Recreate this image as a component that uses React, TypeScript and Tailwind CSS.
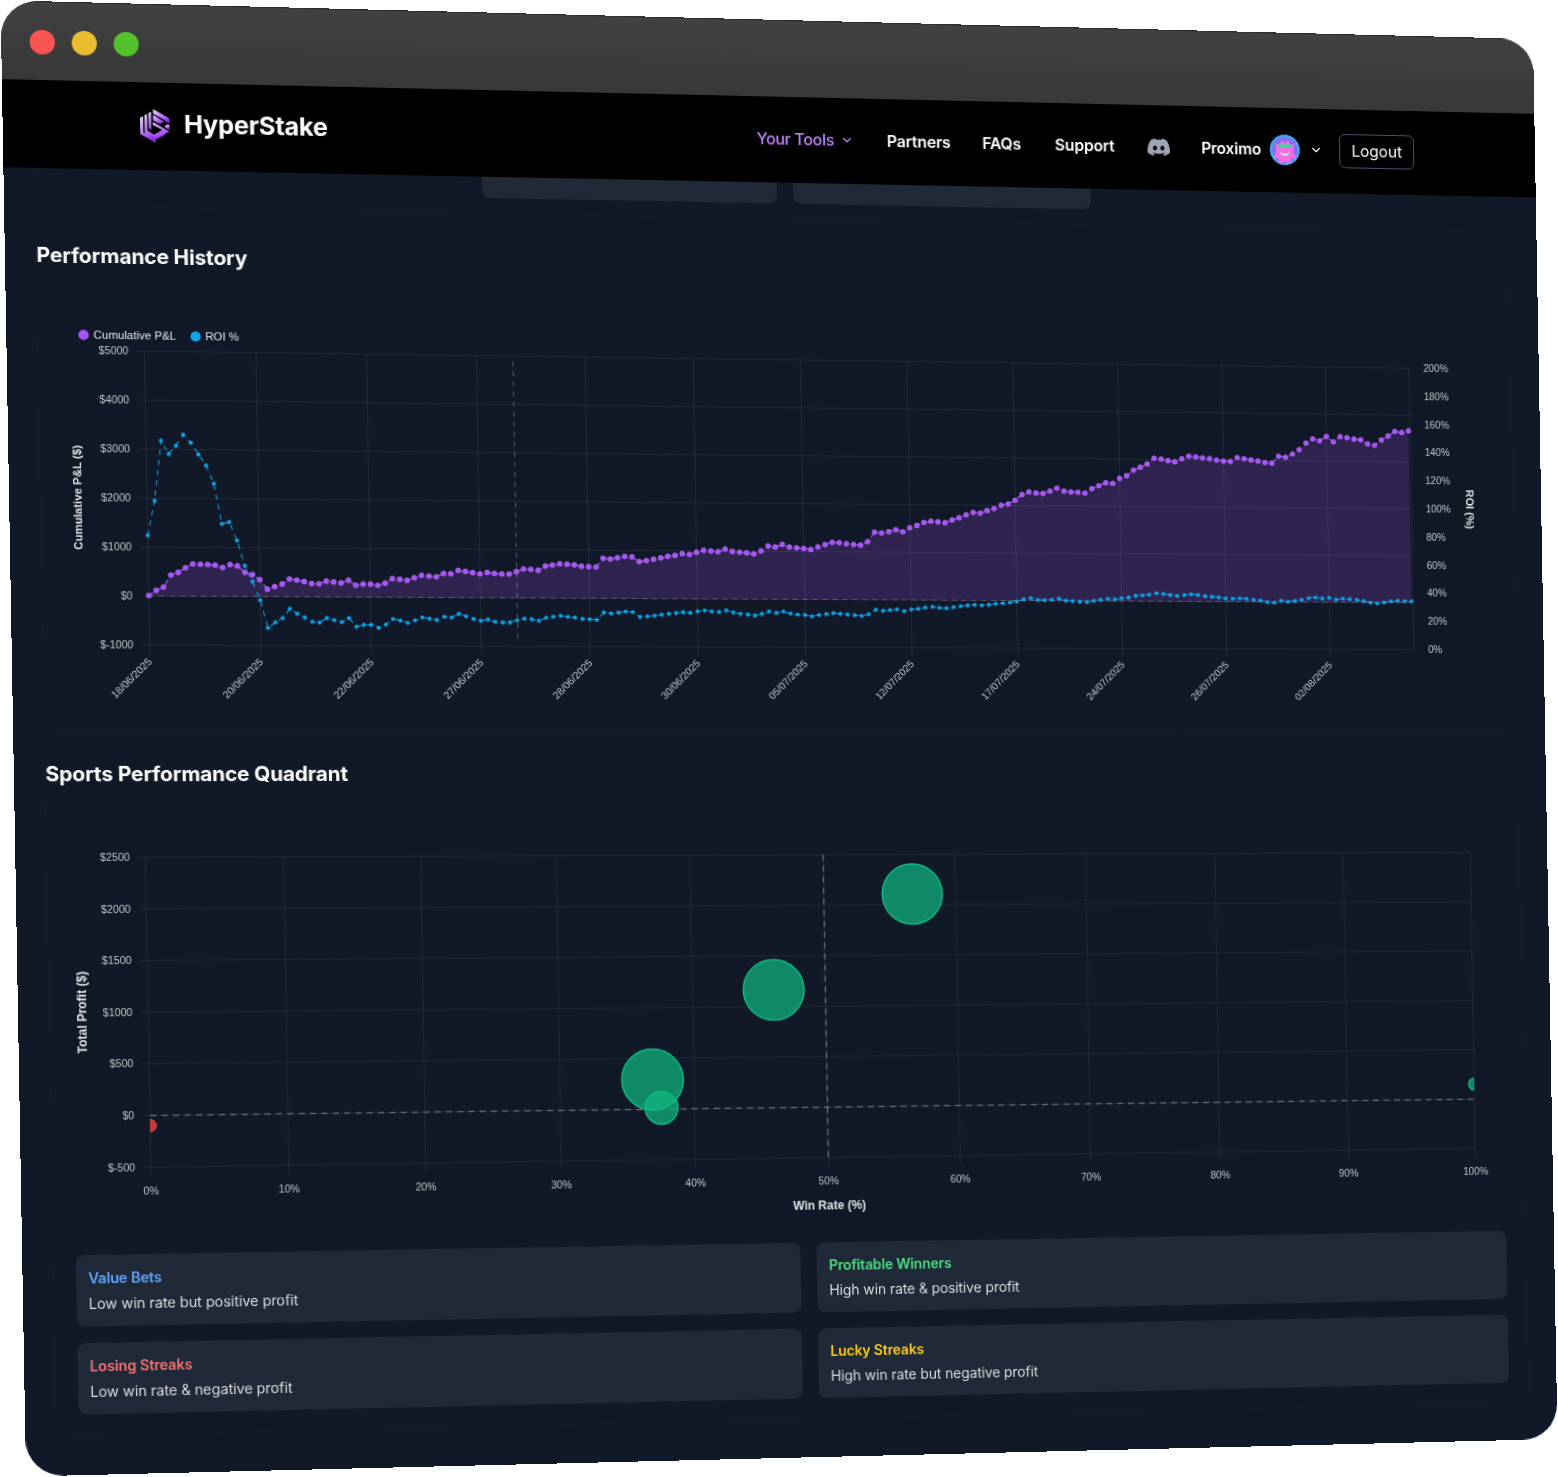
import React from "react";
import { ChevronDown } from "lucide-react";
import { FaDiscord } from "react-icons/fa";

const W = 1532;
const H = 1440;

function perspective(): string {
  const [x0, y0] = [0.5, 0.2];
  const [x1, y1] = [1533, 39];
  const [x2, y2] = [1557.5, 1439];
  const [x3, y3] = [26, 1476.5];
  const dx1 = x1 - x2, dx2 = x3 - x2, sx = x0 - x1 + x2 - x3;
  const dy1 = y1 - y2, dy2 = y3 - y2, sy = y0 - y1 + y2 - y3;
  const den = dx1 * dy2 - dx2 * dy1;
  const g = (sx * dy2 - dx2 * sy) / den;
  const h = (dx1 * sy - sx * dy1) / den;
  const a = x1 - x0 + g * x1, b = x3 - x0 + h * x3;
  const d = y1 - y0 + g * y1, e = y3 - y0 + h * y3;
  return `matrix3d(${a / W},${d / W},0,${g / W},${b / H},${e / H},0,${h / H},0,0,1,0,${x0},${y0},0,1)`;
}

const GRID = "rgba(255,255,255,0.07)";
const LABEL = "#c2c5cb";
const TITLE = "#dfe1e5";

const pnlRaw = [
  10,115,185,430,485,580,660,655,650,635,590,650,625,495,450,345,150,205,260,360,340,310,270,265,320,305,285,340,240,265,265,240,285,380,365,345,400,450,435,420,490,485,555,535,510,485,515,495,485,485,535,590,585,565,
  653,674,701,694,681,653,646,639,819,806,833,861,854,757,778,806,833,868,889,924,910,
  955,997,983,969,1024,976,962,948,927,990,1094,1073,1128,1073,1059,1045,1024,1080,1128,1177,1170,1149,1135,1122,
  1196,1392,1378,1406,1448,1406,1490,1538,1601,1629,1615,1601,1657,1706,1769,1818,1804,1860,1902,
  1972,2000,2077,2197,2254,2232,2225,2275,2338,2275,2260,2254,2239,2331,2394,2458,2444,2549,2606,2725,2789,2859,2979,2965,2930,2908,2972,3028,3014,2993,2979,2951,2930,2923,3007,2986,2958,2937,2908,2894,3042,3021,3092,3183,3324,3415,3373,3465,3352,3465,3444,3415,3401,3317,3289,3401,3486,3585,3563,3599,
];

const roiRaw = [
  74.6,98.2,139.2,130.1,135.8,143.3,137.9,129.9,122.4,110.2,82.7,84.1,71.4,54.2,43.5,30.8,11.8,15.6,18.6,24.9,21.5,19,16.1,15.6,18.6,17.2,15.9,18.6,12.7,14,14,12,14.3,18.1,17,15.4,17.2,19.2,18.3,17.4,19.7,19.2,21.7,20.1,18.3,17,17.9,16.3,15.9,15.9,17.4,18.6,18.1,17.2,
  19.2,19.9,20.6,19.9,19.4,18.5,18.3,17.8,22.9,22.2,22.9,23.6,23.3,19.9,20.3,20.8,21.5,22.2,22.7,23.3,22.9,
  23.9,24.6,23.9,23.5,24.6,23.2,22.3,21.8,21.1,22.3,23.9,23,23.9,22.5,21.8,21.6,20.7,21.6,22.3,23,22.5,22.1,21.6,21.1,
  22.2,25.4,24.7,25.2,25.7,24.5,25.7,26.1,27,27.5,26.8,26.6,27.3,28,28.7,29.1,28.7,29.1,29.8,
  30.2,30.7,31.4,33.1,33.8,32.6,32.4,32.8,33.5,32.1,31.9,31.4,31.2,32.1,32.8,33.5,33.1,34,34.5,35.7,36.1,36.6,37.6,37.1,36.4,35.7,36.4,36.9,36.4,35.7,35.2,34.7,34,33.8,34.2,33.8,33.1,32.6,31.6,31.2,32.6,31.9,32.4,33.3,34.5,35,34.2,34.7,33.5,34.2,33.8,33.3,32.6,31.4,30.9,31.6,32.4,32.8,32.6,32.6,
];

const pnl = pnlRaw.map((v, i) => v * (1 + (0.011 * i) / 177) + (25 * i) / 177);
const roi = roiRaw.map((v, i) => v + (1.8 * i) / 177);

const dates = ["18/06/2025","20/06/2025","22/06/2025","27/06/2025","28/06/2025","30/06/2025","05/07/2025","12/07/2025","17/07/2025","24/07/2025","26/07/2025","02/08/2025"];

function HistoryChart() {
  const L = 131.8, R = 1396, T = 340.5, B = 628.5;
  const step = 107 / 15;
  const px = (i: number) => L + i * step;
  const py = (v: number) => B - ((v + 1000) / 6000) * (B - T);
  const ry = (v: number) => B - (v / 200) * (B - T);
  const zero = py(0);
  const pnlPts = pnl.map((v, i) => `${px(i).toFixed(1)},${py(v).toFixed(1)}`).join(" ");
  const roiPts = roi.map((v, i) => `${px(i).toFixed(1)},${ry(v).toFixed(1)}`).join(" ");
  const area = `${px(0)},${zero} ${pnlPts} ${px(pnl.length - 1)},${zero}`;
  const yTicks = [5000, 4000, 3000, 2000, 1000, 0, -1000];
  const rTicks = [200, 180, 160, 140, 120, 100, 80, 60, 40, 20, 0];
  return (
    <svg viewBox="30.3 300 1474 414" className="block w-[1474px] h-[414px] font-['Liberation_Sans',Arial,sans-serif]">
      <circle cx={73.8} cy={325.5} r={5} fill="#a855f7" />
      <text x={83.4} y={329.4} fontSize={11} fill="#e5e7eb">Cumulative P&amp;L</text>
      <circle cx={181} cy={325.5} r={5} fill="#0ea5e9" />
      <text x={190.2} y={329.4} fontSize={11} fill="#e5e7eb">ROI %</text>
      {yTicks.map((t) => (
        <g key={t}>
          <line x1={L - 8} x2={R} y1={py(t)} y2={py(t)} stroke={GRID} />
          <text x={L - 15.5} y={py(t) + 3.6} fontSize={10.2} fill={LABEL} textAnchor="end">{`$${t}`}</text>
        </g>
      ))}
      {rTicks.map((t) => (
        <text key={t} x={R + 15} y={ry(t) + 3.6} fontSize={10.2} fill={LABEL}>{`${t}%`}</text>
      ))}
      {dates.map((d, i) => {
        const x = L + i * 107;
        return (
          <g key={d}>
            <line x1={x} x2={x} y1={T} y2={B + 8} stroke={GRID} />
            <text transform={`translate(${x + 2.5} ${B + 17}) rotate(-45)`} fontSize={10.2} fill={LABEL} textAnchor="end">{d}</text>
          </g>
        );
      })}
      <line x1={R} x2={R} y1={T} y2={B} stroke={GRID} />
      <polygon points={area} fill="rgba(168,85,247,0.2)" />
      <line x1={L} x2={R} y1={zero} y2={zero} stroke="rgba(255,255,255,0.22)" strokeWidth={1.2} strokeDasharray="5 5" />
      <line x1={488.8} x2={488.8} y1={T + 5} y2={B - 3} stroke="rgba(255,255,255,0.25)" strokeWidth={1.2} strokeDasharray="5 5" />
      <polyline points={pnlPts} fill="none" stroke="#a855f7" strokeWidth={1.2} strokeDasharray="5 5" />
      <polyline points={roiPts} fill="none" stroke="#0ea5e9" strokeWidth={1.2} strokeDasharray="5 5" strokeOpacity={0.85} />
      {pnl.map((v, i) => (
        <circle key={i} cx={px(i)} cy={py(v)} r={2.6} fill="#a855f7" stroke="rgba(192,132,252,0.5)" strokeWidth={0.6} />
      ))}
      {roi.map((v, i) => (
        <circle key={i} cx={px(i)} cy={ry(v)} r={1.8} fill="#0ea5e9" stroke="rgba(14,165,233,0.3)" strokeWidth={1.5} />
      ))}
      <text transform={`translate(66.6 484.5) rotate(-90)`} fontSize={11.2} fontWeight={700} fill={TITLE} textAnchor="middle" dominantBaseline="middle">Cumulative P&amp;L ($)</text>
      <text transform={`translate(1456 484.5) rotate(90)`} fontSize={11.2} fontWeight={700} fill={TITLE} textAnchor="middle" dominantBaseline="middle">ROI (%)</text>
    </svg>
  );
}

function QuadrantChart() {
  const L = 124.5, R = 1451.5, T = 836.5, B = 1140;
  const px = (p: number) => L + (p / 100) * (R - L);
  const py = (v: number) => B - ((v + 500) / 3000) * (B - T);
  const yTicks = [2500, 2000, 1500, 1000, 500, 0, -500];
  const xTicks = [0, 10, 20, 30, 40, 50, 60, 70, 80, 90, 100];
  const bubbles = [
    { x: 56.71, y: 876.2, r: 30.3 },
    { x: 46.1, y: 971.5, r: 30.3 },
    { x: 36.91, y: 1060, r: 30.5 },
    { x: 37.54, y: 1088.1, r: 16.3 },
    { x: 100, y: 1074, r: 5.8 },
  ];
  return (
    <svg viewBox="30.5 790 1474 420" className="block w-[1474px] h-[420px] font-['Liberation_Sans',Arial,sans-serif]">
      <defs>
        <clipPath id="plot">
          <rect x={L} y={T} width={R - L} height={B - T} />
        </clipPath>
      </defs>
      {yTicks.map((t) => (
        <g key={t}>
          <line x1={L - 8} x2={R} y1={py(t)} y2={py(t)} stroke={GRID} />
          <text x={L - 15} y={py(t) + 3.6} fontSize={10.2} fill={LABEL} textAnchor="end">{`$${t}`}</text>
        </g>
      ))}
      {xTicks.map((t) => (
        <g key={t}>
          <line x1={px(t)} x2={px(t)} y1={T} y2={B + 8} stroke={GRID} />
          <text x={px(t)} y={B + 26.6} fontSize={10.2} fill={LABEL} textAnchor="middle">{`${t}%`}</text>
        </g>
      ))}
      <line x1={L} x2={R} y1={py(0)} y2={py(0)} stroke="rgba(255,255,255,0.3)" strokeWidth={1.5} strokeDasharray="6 5" />
      <line x1={px(50)} x2={px(50)} y1={T} y2={B} stroke="rgba(255,255,255,0.3)" strokeWidth={1.5} strokeDasharray="6 5" />
      <g clipPath="url(#plot)">
        {bubbles.map((b, i) => (
          <circle key={i} cx={px(b.x)} cy={b.y} r={b.r} fill="rgba(16,185,129,0.7)" stroke="#10b981" strokeWidth={1.5} />
        ))}
        <circle cx={L} cy={1099.4} r={6} fill="rgba(239,68,68,0.8)" stroke="#ef4444" strokeWidth={1} />
      </g>
      <text transform={`translate(62.8 988) rotate(-90)`} fontSize={12} fontWeight={700} fill={TITLE} textAnchor="middle" dominantBaseline="middle">Total Profit ($)</text>
      <text x={788.5} y={1192} fontSize={12} fontWeight={700} fill={TITLE} textAnchor="middle">Win Rate (%)</text>
    </svg>
  );
}

function Logo() {
  return (
    <svg viewBox="0 0 30 34" className="w-[29px] h-[33px] shrink-0">
      <defs>
        <linearGradient id="lg" x1="0" y1="0" x2="0.4" y2="1">
          <stop offset="0" stopColor="#ecdcff" />
          <stop offset="0.55" stopColor="#c084fc" />
          <stop offset="1" stopColor="#9333ea" />
        </linearGradient>
      </defs>
      <g fill="url(#lg)">
        <polygon points="0,9 3,7.5 3,24 15,31 15,34 0,25.5" />
        <polygon points="4.5,6.5 7,5 7,22 15,26.5 21,23 25,25.5 15,31 4.5,25" />
        <polygon points="8.5,4 11,2.5 11,20.5 15,23 8.5,19.5" />
        <polygon points="13,0 29,9 29,14 24.5,11.5 24.5,11 13,4.5" />
        <polygon points="13,6 24,12.5 19.5,15 13,11.5" />
        <polygon points="12.5,13 29,22.5 17,29 12.5,26.5 22,21 12.5,16" />
        <polygon points="29,15.5 29,20.5 24,17.8 26,15.5" />
      </g>
    </svg>
  );
}

function Avatar() {
  return (
    <svg viewBox="0 0 32 32" className="w-[31px] h-[31px] shrink-0">
      <circle cx="16" cy="16" r="16" fill="#3a9ff0" />
      <circle cx="16" cy="16" r="13.5" fill="#8b6cf0" />
      <path d="M6 9l4 3 2-6 4 3 4-3 2 6 4-3-1 10 4 5-6 1-2 6-5-3-5 3-2-6-6-1 4-5z" fill="#f56fe3" />
      <rect x="9" y="10" width="14" height="3.5" rx="1" fill="#3fd6a0" />
      <path d="M11 18q5 5 10 0q-1 4-5 4t-5-4z" fill="#d9fff3" />
      <circle cx="16" cy="16" r="15" fill="none" stroke="#4db8f5" strokeWidth="1.5" strokeDasharray="3 2" />
    </svg>
  );
}

function Card({ title, color, text }: { title: string; color: string; text: string }) {
  return (
    <div className="bg-[#1f2937] rounded-lg px-3 pt-[13px] h-[70px]">
      <div className={`text-sm font-semibold leading-5 mb-[5px] tracking-[-0.01em] ${color}`}>{title}</div>
      <div className="text-sm leading-5 tracking-[-0.007em] text-[#d8dbe0]">{text}</div>
    </div>
  );
}

export default function App() {
  return (
    <div className="w-[1558px] h-[1477px] overflow-hidden bg-white font-['Inter',sans-serif]">
      <div
        className="w-[1532px] h-[1440px] origin-top-left rounded-[36px] overflow-hidden bg-[#111827] flex flex-col"
        style={{ transform: perspective() }}
      >
        <div className="h-[77px] shrink-0 bg-gradient-to-b from-[#414141] to-[#383838] border-t border-[#2c2c2c] flex items-center gap-[15.5px] pl-[26.5px] pt-[2px]">
          <div className="w-[24.5px] h-[24.5px] rounded-full bg-[#fb5452]" />
          <div className="w-[24.5px] h-[24.5px] rounded-full bg-[#e9bd2e]" />
          <div className="w-[24.5px] h-[24.5px] rounded-full bg-[#53c22d]" />
        </div>

        <nav className="h-[86px] shrink-0 bg-black flex items-center justify-between pl-[131px] pr-[127px] pb-[2px]">
          <div className="flex items-center gap-[13px]">
            <Logo />
            <span className="text-[24.5px] font-bold text-white tracking-[-0.01em] -mt-[3px]">HyperStake</span>
          </div>
          <div className="flex items-center text-white font-semibold text-base tracking-[-0.012em]">
            <span className="text-[#c084fc] font-medium tracking-[-0.02em]">Your Tools</span>
            <ChevronDown className="w-[14px] h-[14px] text-[#c084fc] ml-[6px] mr-[33px]" />
            <span className="mr-[32px]">Partners</span>
            <span className="mr-[34.5px]">FAQs</span>
            <span className="mr-[33px]">Support</span>
            <FaDiscord className="w-[25px] h-[25px] text-[#9fa4b2] mr-[31px]" />
            <span className="mr-[9px]">Proximo</span>
            <Avatar />
            <ChevronDown className="w-[14px] h-[14px] ml-[10px] mr-[17px]" />
            <button className="w-[78px] h-[35px] border border-[#4b5563] rounded-md font-normal tracking-normal text-white">Logout</button>
          </div>
        </nav>

        <div className="mx-[29px] h-[37px] shrink-0 border border-t-0 border-[#151c2b] rounded-b-2xl pl-[431px] flex gap-4">
          <div className="w-[292px] h-[21px] bg-[#1f2937] rounded-b-lg" />
          <div className="w-[301px] h-[21px] bg-[#1f2937] rounded-b-lg" />
        </div>

        <section className="mx-[29px] mt-4 h-[498px] shrink-0 border border-t-0 border-[#151c2b] rounded-2xl">
          <h2 className="pt-[18px] h-[84px] text-xl leading-7 font-bold text-white tracking-[-0.005em]">Performance History</h2>
          <HistoryChart />
        </section>

        <section className="mx-[29px] mt-4 h-[672px] shrink-0 border border-t-0 border-[#151c2b] rounded-2xl">
          <h2 className="pt-[11px] h-[60px] text-xl leading-7 font-bold text-white tracking-[-0.005em]">Sports Performance Quadrant</h2>
          <QuadrantChart />
          <div className="mt-[15px] pl-[20.5px] pr-[20px] grid grid-cols-2 gap-4">
            <Card title="Value Bets" color="text-[#60a5fa]" text="Low win rate but positive profit" />
            <Card title="Profitable Winners" color="text-[#4ade80]" text="High win rate & positive profit" />
            <Card title="Losing Streaks" color="text-[#f87171]" text="Low win rate & negative profit" />
            <Card title="Lucky Streaks" color="text-[#facc15]" text="High win rate but negative profit" />
          </div>
        </section>
      </div>
    </div>
  );
}
